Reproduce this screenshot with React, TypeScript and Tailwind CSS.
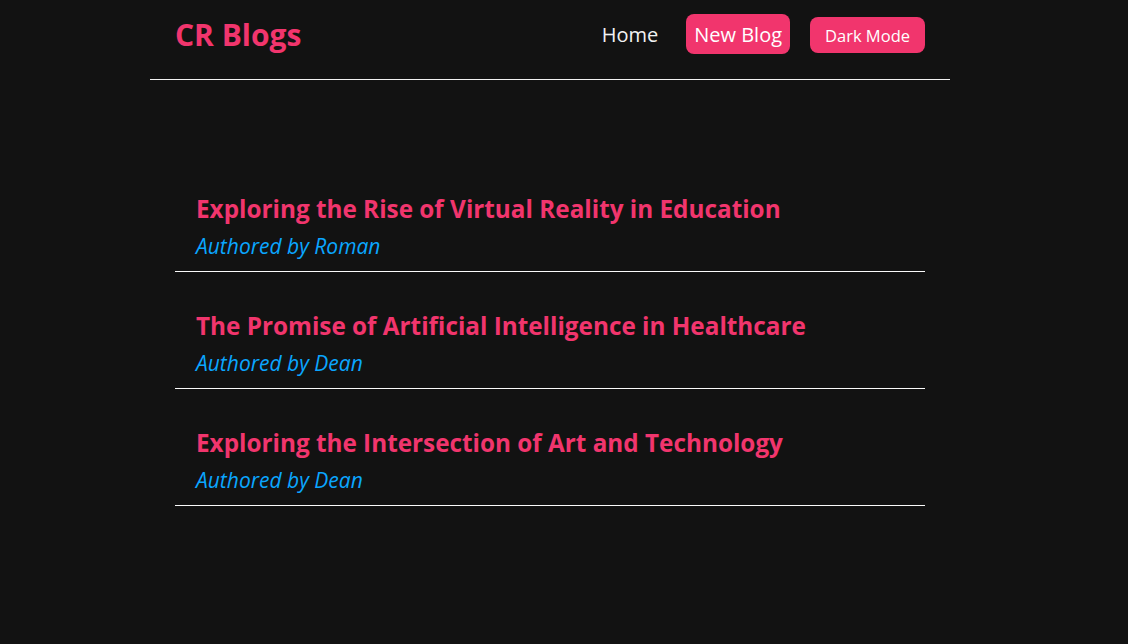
import React from "react";

const blogs = [
  { title: "Exploring the Rise of Virtual Reality in Education", author: "Roman" },
  { title: "The Promise of Artificial Intelligence in Healthcare", author: "Dean" },
  { title: "Exploring the Intersection of Art and Technology", author: "Dean" },
];

export default function App() {
  return (
    <div
      className="min-h-[644px] w-full bg-[#121212]"
      style={{ fontFamily: "'Open Sans', 'Noto Sans', sans-serif" }}
    >
      <div className="w-[1100px]">
        <nav className="mx-auto flex h-[80px] w-[800px] items-center border-b border-[#f2f2f2] px-[25px] pb-[11px]">
          <h1 className="text-[30px] font-bold text-[#f1356d]">CR Blogs</h1>
          <div className="ml-auto flex items-center">
            <a className="mt-[2px] text-[20px] text-[#f2f2f2]">Home</a>
            <a className="ml-[28px] flex h-[40px] items-center rounded-[8px] bg-[#f1356d] px-[8px] pt-[2px] text-[20px] text-white">
              New Blog
            </a>
            <button className="ml-[20px] mt-[2px] flex h-[36px] items-center rounded-[8px] bg-[#f1356d] px-[15px] pt-[2px] text-[16.5px] text-white">
              Dark Mode
            </button>
          </div>
        </nav>
        <div className="mx-auto flex w-[750px] flex-col gap-[21px] pt-[96px]">
          {blogs.map((b) => (
            <div key={b.title} className="flex flex-col border-b border-[#fafafa] pl-[21px] pt-[15px] pb-[10px]">
              <h2 className="text-[24.3px] leading-[36px] font-bold text-[#f1356d]">{b.title}</h2>
              <p className="mt-[4px] text-[21px] leading-[30px] italic text-[#0aa6ff]">
                Authored by {b.author}
              </p>
            </div>
          ))}
        </div>
      </div>
    </div>
  );
}
